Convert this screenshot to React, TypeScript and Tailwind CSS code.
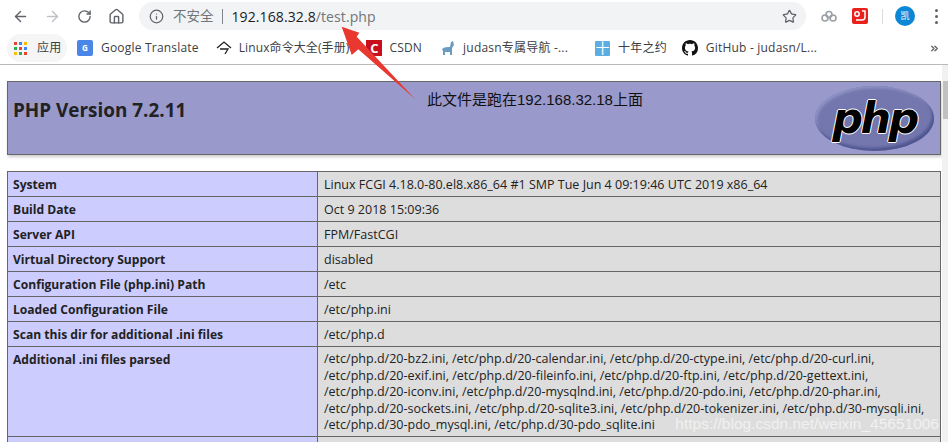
import { ArrowLeft, ArrowRight, RotateCw, Home, Info, Star, ChevronsRight } from "lucide-react";

const rows = [
  { label: "System", value: "Linux FCGI 4.18.0-80.el8.x86_64 #1 SMP Tue Jun 4 09:19:46 UTC 2019 x86_64" },
  { label: "Build Date", value: "Oct 9 2018 15:09:36" },
  { label: "Server API", value: "FPM/FastCGI" },
  { label: "Virtual Directory Support", value: "disabled" },
  { label: "Configuration File (php.ini) Path", value: "/etc" },
  { label: "Loaded Configuration File", value: "/etc/php.ini" },
  { label: "Scan this dir for additional .ini files", value: "/etc/php.d" },
];

const iniLines = [
  "/etc/php.d/20-bz2.ini, /etc/php.d/20-calendar.ini, /etc/php.d/20-ctype.ini, /etc/php.d/20-curl.ini,",
  "/etc/php.d/20-exif.ini, /etc/php.d/20-fileinfo.ini, /etc/php.d/20-ftp.ini, /etc/php.d/20-gettext.ini,",
  "/etc/php.d/20-iconv.ini, /etc/php.d/20-mysqlnd.ini, /etc/php.d/20-pdo.ini, /etc/php.d/20-phar.ini,",
  "/etc/php.d/20-sockets.ini, /etc/php.d/20-sqlite3.ini, /etc/php.d/20-tokenizer.ini, /etc/php.d/30-mysqli.ini,",
  "/etc/php.d/30-pdo_mysql.ini, /etc/php.d/30-pdo_sqlite.ini",
];

const font = "font-['Open_Sans','Noto_Sans_CJK_SC',sans-serif]";

function Toolbar() {
  return (
    <div className="flex h-[32px] items-center bg-white">
      <div className="flex w-[139px] items-center pl-[12px] text-[#5f6368]">
        <ArrowLeft size={17} strokeWidth={2} />
        <ArrowRight size={17} strokeWidth={2} className="ml-[15px] text-[#bdc1c6]" />
        <RotateCw size={15} strokeWidth={2.2} className="ml-[16px]" />
        <Home size={17} strokeWidth={2} className="ml-[16px]" />
      </div>
      <div className="flex h-[28px] w-[667px] items-center rounded-[14px] bg-[#f1f3f4] pl-[10px] pr-[9px]">
        <Info size={15} strokeWidth={2} className="text-[#5f6368]" />
        <span className="ml-[9px] text-[13.5px] text-[#70757a]">不安全</span>
        <span className="ml-[8px] h-[15px] w-px bg-[#80868b]" />
        <span className="ml-[9px] text-[14px] tracking-[0.1px] text-[#202124]">
          192.168.32.8<span className="text-[#70757a]">/test.php</span>
        </span>
        <Star size={15} strokeWidth={2} className="ml-auto text-[#5f6368]" />
      </div>
      <div className="flex flex-1 items-center pl-[14px]">
        <svg width="17" height="13" viewBox="0 0 17 13" fill="none" stroke="#9aa0a6" strokeWidth="1.6">
          <circle cx="5" cy="8" r="3" />
          <circle cx="9" cy="4.5" r="3" />
          <circle cx="13" cy="8" r="3" />
        </svg>
        <svg className="ml-[15px]" width="16" height="16" viewBox="0 0 16 16">
          <rect width="16" height="16" rx="2" fill="#e8211d" />
          <circle cx="5" cy="6" r="2.2" fill="none" stroke="#fff" strokeWidth="1.5" />
          <path d="M10 3h3v6c0 2-1 3-3 3H4" fill="none" stroke="#fff" strokeWidth="1.5" />
        </svg>
        <span className="ml-[14px] h-[15px] w-px bg-[#dadce0]" />
        <div className="ml-[12px] flex h-[20px] w-[20px] items-center justify-center rounded-full bg-[#0b87d6] text-[9px] text-white">
          凯
        </div>
        <div className="ml-[20px] flex flex-col gap-[3px]">
          <span className="h-[3px] w-[3px] rounded-full bg-[#5f6368]" />
          <span className="h-[3px] w-[3px] rounded-full bg-[#5f6368]" />
          <span className="h-[3px] w-[3px] rounded-full bg-[#5f6368]" />
        </div>
      </div>
    </div>
  );
}

function Bookmarks() {
  const apps = ["#ea4335", "#4285f4", "#fbbc05", "#34a853", "#ea4335", "#4285f4", "#fbbc05", "#34a853", "#ea4335"];
  return (
    <div className="flex h-[33px] items-center border-b border-[#b9b9b9] bg-white text-[12px] tracking-[0.2px] text-[#3c4043]">
      <div className="ml-[7px] flex h-[28px] w-[60px] items-center rounded-[14px] bg-[#f5f5f5] pl-[7px]">
        <div className="grid grid-cols-3 gap-[2px]">
          {apps.map((c, i) => (
            <span key={i} className="h-[3px] w-[3px]" style={{ backgroundColor: c }} />
          ))}
        </div>
        <span className="ml-[10px]">应用</span>
      </div>
      <div className="ml-[10px] flex h-[16px] w-[16px] items-center justify-center rounded-[2px] bg-[#4a86e8] text-[8px] font-bold text-white">
        G
      </div>
      <span className="ml-[8px]">Google Translate</span>
      <svg className="ml-[17px]" width="16" height="16" viewBox="0 0 16 16" fill="none" stroke="#222" strokeWidth="1.3">
        <path d="M1 8 8 2l7 6" />
        <path d="M4 9h8l-3 5" />
      </svg>
      <span className="ml-[7px] tracking-[0.1px]">Linux命令大全(手册)</span>
      <div className="ml-[17px] flex h-[16px] w-[16px] items-center justify-center bg-[#c8101d] text-[13px] font-bold leading-none text-white">
        C
      </div>
      <span className="ml-[7px]">CSDN</span>
      <svg className="ml-[19px]" width="13" height="16" viewBox="0 0 13 16" fill="#6b9cc0">
        <path d="M1 9c2-2 6-2 8-2l1-5 2-1 1 4-2 3v7h-2v-3H4v3H2v-4L0 7z" />
      </svg>
      <span className="ml-[9px]">judasn专属导航 -...</span>
      <div className="ml-[27px] flex h-[15px] w-[15px] items-center justify-center rounded-[1px] bg-[#5cade2] text-[14px] leading-none text-white">
        十
      </div>
      <span className="ml-[8px]">十年之约</span>
      <svg className="ml-[15px]" width="16" height="16" viewBox="0 0 16 16" fill="#111">
        <path d="M8 0C3.58 0 0 3.58 0 8c0 3.54 2.29 6.53 5.47 7.59.4.07.55-.17.55-.38 0-.19-.01-.82-.01-1.49-2.01.37-2.53-.49-2.69-.94-.09-.23-.48-.94-.82-1.13-.28-.15-.68-.52-.01-.53.63-.01 1.08.58 1.23.82.72 1.21 1.87.87 2.33.66.07-.52.28-.87.51-1.07-1.78-.2-3.64-.89-3.64-3.95 0-.87.31-1.59.82-2.15-.08-.2-.36-1.02.08-2.12 0 0 .67-.21 2.2.82.64-.18 1.32-.27 2-.27s1.36.09 2 .27c1.53-1.04 2.2-.82 2.2-.82.44 1.1.16 1.92.08 2.12.51.56.82 1.27.82 2.15 0 3.07-1.87 3.75-3.65 3.95.29.25.54.73.54 1.48 0 1.07-.01 1.93-.01 2.2 0 .21.15.46.55.38A8.01 8.01 0 0 0 16 8c0-4.42-3.58-8-8-8z" />
      </svg>
      <span className="ml-[8px]">GitHub - judasn/L...</span>
      <ChevronsRight size={11} strokeWidth={3} className="ml-auto mr-[8px] text-[#5f6368]" />
    </div>
  );
}

function PhpLogo() {
  return (
    <div className="mr-[6px] flex h-[65px] w-[119px] items-center justify-center rounded-[50%] bg-[#7377ad] shadow-[inset_-2px_-3px_3px_#4f5590,inset_2px_2px_3px_#8f93c4]">
      <span className="font-['DejaVu_Sans',sans-serif] text-[43px] font-bold italic leading-none tracking-[-2.5px] text-black [text-shadow:1px_0_0_#fff,-1px_0_0_#fff,0_1px_0_#fff,0_-1px_0_#fff]">
        php
      </span>
    </div>
  );
}

export default function App() {
  return (
    <div className={`relative flex h-[442px] w-[948px] flex-col overflow-hidden bg-white ${font}`}>
      <Toolbar />
      <Bookmarks />
      <div className="flex min-h-0 flex-1">
        <div className="flex-1 pl-[7px] pr-[1px] pt-[16px] text-[12.52px] text-[#222]">
          <div className="flex h-[74px] items-center justify-between border border-[#666] bg-[#9999cc] pl-[5px] shadow-[1px_2px_3px_#ccc]">
            <h1 className="mb-[16px] text-[18.9px] font-bold text-[#222]">PHP Version 7.2.11</h1>
            <PhpLogo />
          </div>
          <div className="mt-[16px] border-t border-l border-[#666]">
            {rows.map((row) => (
              <div key={row.label} className="grid h-[25px] grid-cols-[310px_1fr] items-stretch border-b border-[#666] leading-[22px]">
                <div className="border-r border-[#666] bg-[#ccccff] pl-[5px] pt-[2px] text-[12.1px] font-bold">{row.label}</div>
                <div className="border-r border-[#666] bg-[#dddddd] pl-[6px] pt-[2px]">{row.value}</div>
              </div>
            ))}
            <div className="grid h-[90px] grid-cols-[310px_1fr] border-b border-[#666]">
              <div className="border-r border-[#666] bg-[#ccccff] pl-[5px] pt-[4px] text-[12.1px] font-bold leading-[18px]">
                Additional .ini files parsed
              </div>
              <div className="border-r border-[#666] bg-[#dddddd] pl-[6px] pt-[4px] leading-[16.5px]">
                {iniLines.map((line) => (
                  <div key={line}>{line}</div>
                ))}
              </div>
            </div>
            <div className="grid h-[10px] grid-cols-[310px_1fr]">
              <div className="border-r border-[#666] bg-[#ccccff]" />
              <div className="border-r border-[#666] bg-[#dddddd]" />
            </div>
          </div>
        </div>
        <div className="w-[6px] bg-[#f1f1f1] pt-[16px]">
          <div className="ml-[1px] h-[38px] bg-[#c1c1c1]" />
        </div>
      </div>

      {/* annotation on top of the screenshot */}
      <svg className="absolute left-[340px] top-[24px]" width="80" height="78" viewBox="0 0 80 78">
        <path d="M1.7 2.7 19.3 8.7 16.7 12.7 75 75 18.3 25.3 11.7 31Z" fill="#e8382f" />
      </svg>
      <span className="absolute left-[427px] top-[91px] font-['Liberation_Sans','Noto_Sans_CJK_SC',sans-serif] text-[15px] leading-[18px] text-[#111]">
        此文件是跑在192.168.32.18上面
      </span>
      <span className="absolute right-[9px] top-[415px] font-['Liberation_Sans',sans-serif] text-[15.5px] leading-[18px] text-white/60">
        https://blog.csdn.net/weixin_45651006
      </span>
    </div>
  );
}
